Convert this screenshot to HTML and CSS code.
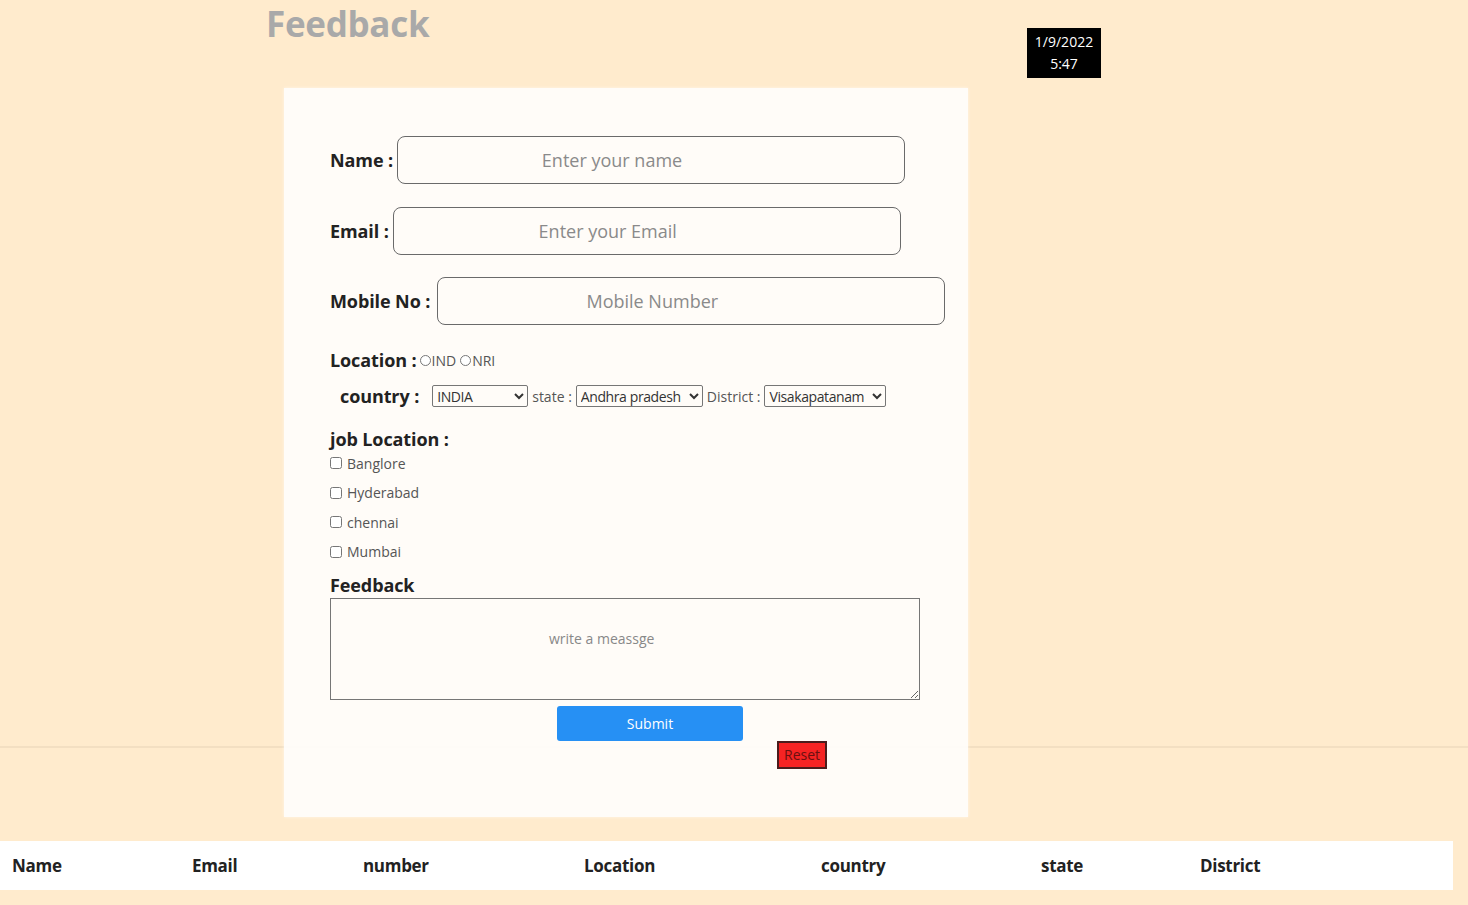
FILE: index.html
```html
<!DOCTYPE html>
<html lang="en">
<head>
<meta charset="utf-8">
<title>Feedback</title>
<link rel="stylesheet" href="styles.css">
</head>
<body>
<header class="top">
  <h1 class="title">Feedback</h1>
  <div class="clock"><div>1/9/2022</div><div>5:47</div></div>
</header>
<main class="stage">
  <form class="card">
    <div class="row">
      <label class="lbl" for="n">Name :</label>
      <input class="field" id="n" type="text" placeholder="Enter your name">
    </div>
    <div class="row">
      <label class="lbl" for="e">Email :</label>
      <input class="field" id="e" type="text" placeholder="Enter your Email">
    </div>
    <div class="row row-mobile">
      <label class="lbl" for="m">Mobile No :</label>
      <input class="field" id="m" type="text" placeholder="Mobile Number">
    </div>
    <div class="loc">
      <span class="lbl">Location :</span>
      <span class="opt"><input class="radio" type="radio" name="loc">IND</span>
      <span class="opt"><input class="radio" type="radio" name="loc">NRI</span>
    </div>
    <div class="sel-row">
      <span class="lbl country">country :</span>
      <select class="sel w-india"><option>INDIA</option></select>
      <span class="small">state :</span>
      <select class="sel w-state"><option>Andhra pradesh</option></select>
      <span class="small">District :</span>
      <select class="sel w-dist"><option>Visakapatanam</option></select>
    </div>
    <div class="lbl job">job Location :</div>
    <div class="checks">
      <label class="chk"><input class="box" type="checkbox">Banglore</label>
      <label class="chk"><input class="box" type="checkbox">Hyderabad</label>
      <label class="chk"><input class="box" type="checkbox">chennai</label>
      <label class="chk"><input class="box" type="checkbox">Mumbai</label>
    </div>
    <div class="lbl fb">Feedback</div>
    <textarea class="msg" placeholder="write a meassge"></textarea>
    <button class="submit" type="button">Submit</button>
    <button class="reset" type="reset">Reset</button>
  </form>
</main>
<div class="thead">
  <span>Name</span><span>Email</span><span>number</span><span>Location</span><span>country</span><span>state</span><span>District</span>
</div>
</body>
</html>
```

FILE: styles.css
```css
html, body {
  margin: 0;
  padding: 0;
}
body {
  background: #ffebcd;
  font-family: "Open Sans", "Noto Sans", sans-serif;
  color: #222;
  height: 905px;
  overflow: hidden;
}
.top {
  display: grid;
  grid-template-columns: 1027px 74px;
  height: 88px;
}
.title {
  margin: 0;
  padding-left: 266px;
  font-size: 35px;
  line-height: 48px;
  font-weight: 700;
  color: #a9a9a9;
  letter-spacing: -0.3px;
}
.clock {
  margin-top: 28px;
  height: 50px;
  background: #000;
  color: #fff;
  font-size: 14px;
  line-height: 22px;
  padding-top: 3px;
  box-sizing: border-box;
  text-align: center;
}
.stage {
  background: linear-gradient(to bottom, transparent 658px, #f3dfc2 658px, #f3dfc2 660px, transparent 660px);
  height: 729px;
}
.card {
  margin-left: 284px;
  width: 684px;
  height: 729px;
  box-sizing: border-box;
  padding: 48px 0 0 46px;
  background: rgba(255, 255, 255, 0.86);
  box-shadow: 0 0 3px rgba(255, 255, 255, 0.6);
}
.lbl {
  font-size: 18px;
  font-weight: 700;
  color: #222;
  white-space: nowrap;
  letter-spacing: -0.1px;
}
.row {
  display: flex;
  align-items: center;
  gap: 4px;
  margin-bottom: 23px;
}
.row-mobile {
  margin-top: -1px;
  gap: 7px;
}
.field {
  width: 508px;
  height: 48px;
  box-sizing: border-box;
  border: 1px solid #6a6a6a;
  border-radius: 8px;
  background: #fffcf8;
  font-family: inherit;
  font-size: 18px;
  text-align: center;
  padding: 0 78px 0 0;
  outline: none;
}
.field::placeholder {
  color: #8a8a8a;
}
.loc {
  display: flex;
  align-items: center;
  height: 24px;
  margin-top: 4px;
}
.opt {
  display: inline-flex;
  align-items: center;
  font-size: 14px;
  color: #555;
  margin-left: 3px;
}
.opt + .opt { margin-left: 4px; }
.radio {
  width: 11px;
  height: 11px;
  margin: 0 1px 0 0;
}
.sel-row {
  display: flex;
  align-items: center;
  gap: 4px;
  height: 22px;
  margin-top: 13px;
}
.country {
  margin-left: 10px;
  margin-right: 9px;
}
.small {
  font-size: 14px;
  color: #555;
}
.sel {
  height: 22px;
  font-family: inherit;
  font-size: 14px;
  letter-spacing: -0.4px;
  color: #333;
  border: 1px solid #767676;
  border-radius: 2px;
  background: #fffcf8;
  padding: 0;
}
.w-india { width: 96px; }
.w-state { width: 127px; }
.w-dist { width: 122px; }
.job {
  margin-top: 20px;
  line-height: 24px;
}
.checks {
  display: flex;
  flex-direction: column;
  gap: 5.5px;
}
.chk {
  display: flex;
  align-items: center;
  height: 24px;
  font-size: 14px;
  color: #555;
}
.box {
  width: 12px;
  height: 12px;
  margin: 0 5px 0 0;
}
.fb {
  margin-top: 9px;
  line-height: 24px;
}
.msg {
  display: block;
  width: 590px;
  height: 102px;
  box-sizing: border-box;
  margin: 1px 0 0 0;
  border: 1px solid #767676;
  background: #fffcf8;
  padding: 30px 0 0 218px;
  font-family: inherit;
  font-size: 14px;
  resize: vertical;
  outline: none;
}
.msg::placeholder { color: #888; }
.submit {
  display: block;
  margin: 6px 0 0 227px;
  width: 186px;
  height: 35px;
  border: none;
  border-radius: 3px;
  background: #2690f4;
  color: #fff;
  font-family: inherit;
  font-size: 14px;
}
.reset {
  display: block;
  margin: 0 0 0 447px;
  width: 50px;
  height: 28px;
  border: 2px solid #4a1c1c;
  background: #f52323;
  color: #6a1010;
  font-family: inherit;
  font-size: 14px;
  padding: 0;
}
.thead {
  margin-top: 24px;
  width: 1453px;
  height: 49px;
  box-sizing: border-box;
  background: #fff;
  display: grid;
  grid-template-columns: 180px 171px 221px 237px 220px 159px 1fr;
  align-items: center;
  padding-left: 12px;
  font-size: 17px;
  font-weight: 700;
  color: #222;
  letter-spacing: -0.3px;
}
```
